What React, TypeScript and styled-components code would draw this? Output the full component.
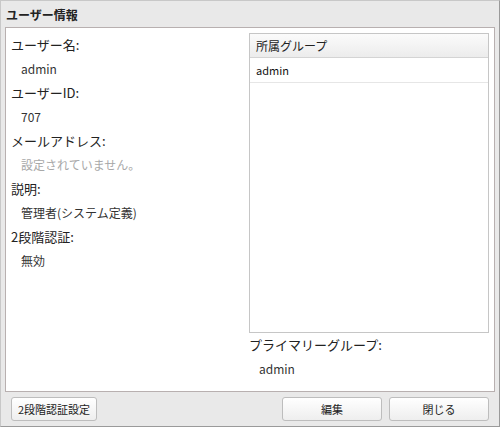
import React from 'react';
import styled, { createGlobalStyle } from 'styled-components';

const GlobalStyle = createGlobalStyle`
  html, body {
    margin: 0;
    padding: 0;
    background: #ffffff;
  }
  body {
    font-family: "Noto Sans CJK JP", "Noto Sans", sans-serif;
  }
`;

const Window = styled.div`
  width: 500px;
  height: 427px;
  box-sizing: border-box;
  display: flex;
  flex-direction: column;
  background: #e9e9e9;
  border: 1px solid #c8c8c8;
  border-right-color: #9a9a9a;
  border-bottom-color: #9a9a9a;
  padding: 0 4px 0 4px;
`;

const TitleBar = styled.div`
  height: 26px;
  display: flex;
  align-items: center;
  padding-left: 1px;
  font-size: 12px;
  font-weight: bold;
  color: #222;
`;

const Panel = styled.div`
  flex: 1;
  display: flex;
  background: #ffffff;
  border: 1px solid #b8b0b0;
  padding: 5px 5px 0 5px;
  min-height: 0;
`;

const LeftColumn = styled.div`
  flex: 1;
  display: flex;
  flex-direction: column;
`;

const RightColumn = styled.div`
  width: 240px;
  display: flex;
  flex-direction: column;
`;

const Label = styled.div`
  height: 24px;
  line-height: 24px;
  font-size: 13px;
  color: #222;
  white-space: nowrap;
`;

const Value = styled.div<{ $muted?: boolean }>`
  height: 24px;
  line-height: 24px;
  padding-left: 10px;
  font-size: 12px;
  color: ${(p) => (p.$muted ? '#a8a8a8' : '#333')};
  white-space: nowrap;
`;

const GroupList = styled.div`
  height: 300px;
  box-sizing: border-box;
  border: 1px solid #c6c6c6;
  display: flex;
  flex-direction: column;
`;

const GroupHeader = styled.div`
  height: 23px;
  line-height: 23px;
  padding-left: 6px;
  font-size: 12px;
  color: #222;
  background: linear-gradient(#fbfbfb, #ececec);
  border-bottom: 1px solid #d4d4d4;
`;

const GroupRow = styled.div`
  height: 24px;
  line-height: 24px;
  padding-left: 6px;
  font-size: 11px;
  color: #111;
  border-bottom: 1px solid #e6e6e6;
`;

const Footer = styled.div`
  height: 34px;
  display: flex;
  align-items: center;
  padding: 0 6px 0 6px;
  gap: 7px;
`;

const Spacer = styled.div`
  flex: 1;
`;

const Button = styled.button<{ $width: number }>`
  width: ${(p) => p.$width}px;
  height: 24px;
  box-sizing: border-box;
  border: 1px solid #bdbdbd;
  border-radius: 3px;
  background: linear-gradient(#ffffff, #eeeeee);
  font-family: "Noto Sans CJK JP", "Noto Sans", sans-serif;
  font-size: 11px;
  color: #222;
  padding: 0;
  cursor: pointer;
`;

const fields: { label: string; value: string; muted?: boolean }[] = [
  { label: 'ユーザー名:', value: 'admin' },
  { label: 'ユーザーID:', value: '707' },
  { label: 'メールアドレス:', value: '設定されていません。', muted: true },
  { label: '説明:', value: '管理者(システム定義)' },
  { label: '2段階認証:', value: '無効' },
];

export default function App() {
  return (
    <>
      <GlobalStyle />
      <Window>
        <TitleBar>ユーザー情報</TitleBar>
        <Panel>
          <LeftColumn>
            {fields.map((f) => (
              <React.Fragment key={f.label}>
                <Label>{f.label}</Label>
                <Value $muted={f.muted}>{f.value}</Value>
              </React.Fragment>
            ))}
          </LeftColumn>
          <RightColumn>
            <GroupList>
              <GroupHeader>所属グループ</GroupHeader>
              <GroupRow>admin</GroupRow>
            </GroupList>
            <Label>プライマリーグループ:</Label>
            <Value>admin</Value>
          </RightColumn>
        </Panel>
        <Footer>
          <Button $width={86}>2段階認証設定</Button>
          <Spacer />
          <Button $width={100}>編集</Button>
          <Button $width={100}>閉じる</Button>
        </Footer>
      </Window>
    </>
  );
}
